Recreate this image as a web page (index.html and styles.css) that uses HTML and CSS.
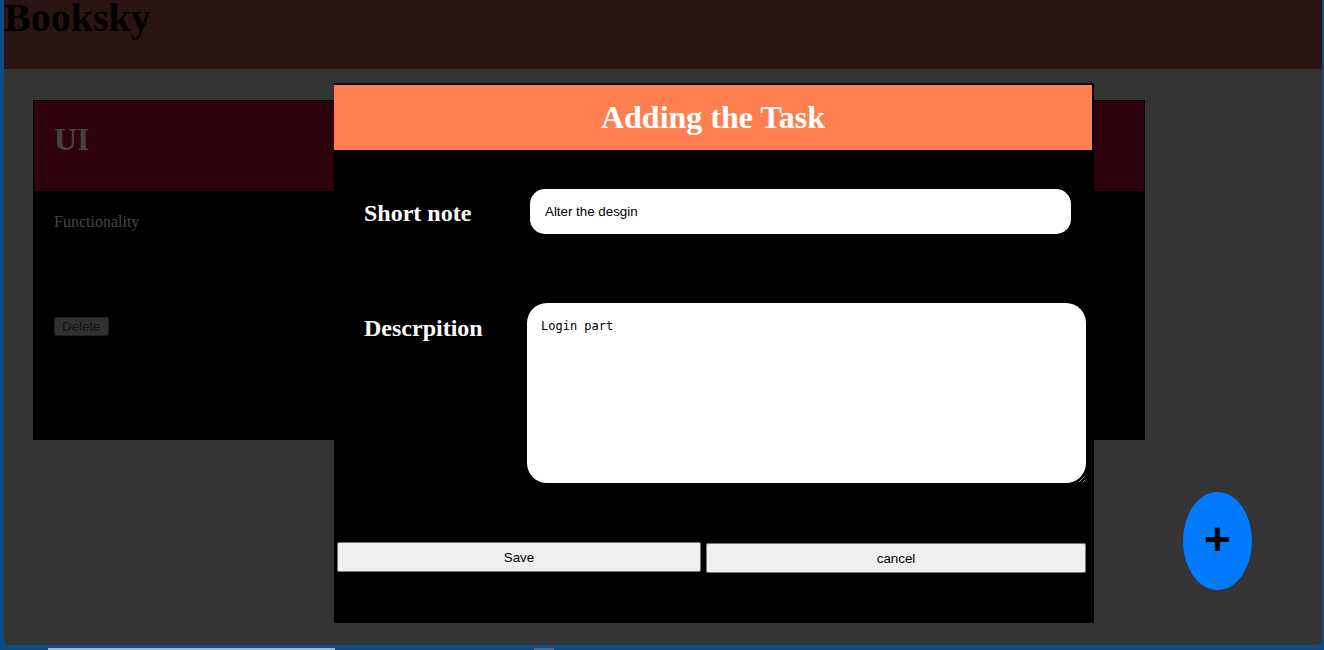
FILE: index.html
```html
<!DOCTYPE html>
<html lang="en">
<head>
<meta charset="utf-8">
<title>Booksky</title>
<link rel="stylesheet" href="styles.css">
</head>
<body>
<div class="screen">
  <div class="window">
    <header class="app-header"><h1>Booksky</h1></header>
    <main class="board">
      <section class="card">
        <div class="card-head"><h1>UI</h1></div>
        <div class="card-body">
          <p>Functionality</p>
          <button class="btn-delete">Delete</button>
        </div>
      </section>
    </main>
  </div>
  <div class="taskbar">
    <span class="tb-gap1"></span>
    <span class="tb-seg tb-seg-light"></span>
    <span class="tb-gap2"></span>
    <span class="tb-seg tb-seg-gray"></span>
  </div>
</div>

<div class="modal">
  <div class="modal-head"><h2>Adding the Task</h2></div>
  <div class="modal-body">
    <div class="field-row row-note">
      <label class="field-label">Short note</label>
      <input class="field-input" type="text" value="Alter the desgin">
    </div>
    <div class="field-row row-desc">
      <label class="field-label label-desc">Descrpition</label>
      <textarea class="field-area">Login part</textarea>
    </div>
    <div class="actions">
      <button class="btn btn-save">Save</button>
      <button class="btn btn-cancel">cancel</button>
    </div>
  </div>
</div>

<button class="fab">+</button>
</body>
</html>
```
FILE: styles.css
```css
* { box-sizing: border-box; }
html, body { margin: 0; padding: 0; }
body {
  width: 1324px;
  height: 650px;
  overflow: hidden;
  font-family: "Liberation Serif", "Times New Roman", serif;
  background: #0d4c82;
  position: relative;
}
.screen {
  height: 650px;
  display: flex;
  flex-direction: column;
  padding: 0 2px 0 4px;
}
.window {
  flex: 1;
  background: #343434;
  border-radius: 0 0 6px 6px;
  overflow: hidden;
}
.app-header {
  height: 69px;
  background: #2a1413;
}
.app-header h1 {
  margin: 0;
  font-size: 40px;
  line-height: 36px;
  font-weight: bold;
  color: #000;
}
.board {
  padding: 31px 0 0 29px;
}
.card {
  width: 1112px;
  height: 340px;
  border: 1px solid #000;
  display: flex;
  flex-direction: column;
}
.card-head {
  height: 90px;
  background: #2e030e;
  padding-left: 20px;
}
.card-head h1 {
  margin: 20px 0 0;
  font-size: 32px;
  font-weight: bold;
  color: #444;
}
.card-body {
  flex: 1;
  background: #000;
  padding-left: 20px;
}
.card-body p {
  margin: 22px 0 0;
  font-size: 16px;
  color: #464646;
}
.btn-delete {
  margin-top: 86px;
  font-family: "Liberation Sans", Arial, sans-serif;
  font-size: 13.33px;
  padding: 1px 7px;
  background: #303030;
  border: 1px solid #1e1e1e;
  border-radius: 2px;
  color: #141414;
}
.taskbar {
  height: 5px;
  display: flex;
  align-items: flex-end;
}
.tb-gap1 { width: 44px; }
.tb-seg { height: 2px; }
.tb-seg-light { width: 287px; background: #9fb7cf; }
.tb-gap2 { width: 199px; }
.tb-seg-gray { width: 20px; background: #4f6a86; }

.modal {
  position: absolute;
  left: 334px;
  top: 83px;
  width: 760px;
  height: 540px;
  background: #000;
  border-top: 2px solid #000;
}
.modal-head {
  width: 758px;
  height: 65px;
  background: #ff7f50;
}
.modal-head h2 {
  margin: 0;
  text-align: center;
  font-size: 32px;
  line-height: 65px;
  font-weight: bold;
  color: #fff;
}
.modal-body {
  display: flex;
  flex-direction: column;
}
.field-row {
  display: flex;
  padding-left: 30px;
}
.row-note {
  margin-top: 39px;
  align-items: center;
}
.row-desc {
  margin-top: 69px;
  align-items: flex-start;
}
.field-label {
  width: 163px;
  font-size: 24px;
  font-weight: bold;
  color: #fff;
  padding-top: 4px;
}
.label-desc {
  padding-top: 0;
  margin-top: 12px;
}
.field-input {
  margin-left: 3px;
  width: 541px;
  height: 45px;
  border: none;
  border-radius: 15px;
  background: #fff;
  padding: 0 15px;
  font-family: "Liberation Sans", Arial, sans-serif;
  font-size: 13.33px;
  color: #000;
  outline: none;
}
.field-area {
  width: 559px;
  height: 180px;
  border: none;
  border-radius: 20px;
  background: #fff;
  padding: 16px 14px;
  font-family: "DejaVu Sans Mono", "Liberation Mono", monospace;
  font-size: 12px;
  color: #000;
  outline: none;
  resize: both;
}
.actions {
  margin-top: 59px;
  padding-left: 3px;
  display: grid;
  grid-template-columns: 364px 380px;
  column-gap: 5px;
  align-items: start;
}
.btn {
  height: 30px;
  background: #efefef;
  border: 1px solid #767676;
  border-radius: 2px;
  font-family: "Liberation Sans", Arial, sans-serif;
  font-size: 13.33px;
  color: #000;
}
.btn-cancel { margin-top: 1px; }

.fab {
  position: absolute;
  left: 1183px;
  top: 492px;
  width: 69px;
  height: 98px;
  border-radius: 50%;
  border: none;
  background: #007bff;
  color: #000;
  font-family: "Liberation Sans", Arial, sans-serif;
  font-size: 46px;
  font-weight: bold;
  line-height: 1;
  padding: 0 0 4px;
  display: flex;
  align-items: center;
  justify-content: center;
}
```
